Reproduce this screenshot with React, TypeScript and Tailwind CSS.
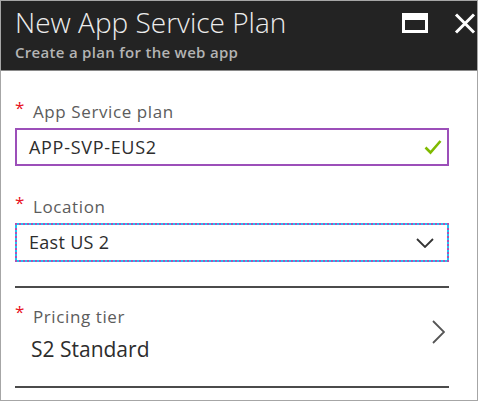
import React from 'react';

function Asterisk() {
  return <span className="text-[#e81123] text-[17px] leading-none w-[18px] shrink-0 -mt-[2px]">*</span>;
}

function MaximizeIcon() {
  return (
    <svg width="26" height="20" viewBox="0 0 26 20" className="block">
      <rect x="1.5" y="1.5" width="23" height="17" fill="none" stroke="#fff" strokeWidth="3" />
      <rect x="1" y="1" width="24" height="6" fill="#fff" />
    </svg>
  );
}

function CloseIcon() {
  return (
    <svg width="22" height="21" viewBox="0 0 22 21" className="block">
      <path d="M2 1.5 L20 19.5 M20 1.5 L2 19.5" stroke="#fff" strokeWidth="3" />
    </svg>
  );
}

export default function App() {
  return (
    <div className="w-[480px] h-[403px] bg-white font-['Open_Sans',sans-serif]">
      <div className="w-[478px] h-[401px] border border-[#a6a6a6] flex flex-col">
        <header className="h-[70px] shrink-0 bg-[#232323] border-b border-[#8a8a8a] flex justify-between pl-[14px] pr-[1px]">
          <div className="pt-[4px]">
            <h1 className="text-[28px] leading-[34px] font-light text-[#ececec]">New App Service Plan</h1>
            <p className="text-[15px] leading-[20px] font-semibold text-[#b4b4b4] mt-[3px] tracking-[0.3px]">Create a plan for the web app</p>
          </div>
          <div className="flex items-start gap-[26px] pt-[12px]">
            <MaximizeIcon />
            <CloseIcon />
          </div>
        </header>

        <div className="px-[14px] pt-[30px] pr-[28px]">
          <div className="flex items-start h-[27px]">
            <Asterisk />
            <span className="text-[17px] leading-[22px] text-[#5c5c5c] tracking-[0.6px]">App Service plan</span>
          </div>
          <div className="h-[38px] border-2 border-[#9c4fb9] flex items-center justify-between pl-[12px] pr-[5px]">
            <span className="text-[18px] text-[#2d2d2d] tracking-[0.7px]">APP-SVP-EUS2</span>
            <svg width="18" height="15" viewBox="0 0 18 15">
              <path d="M1.5 7.5 L6.5 12.5 L16.5 1" fill="none" stroke="#7fba00" strokeWidth="2.6" />
            </svg>
          </div>

          <div className="flex items-start h-[27px] mt-[30px]">
            <Asterisk />
            <span className="text-[17px] leading-[22px] text-[#5c5c5c] tracking-[0.6px]">Location</span>
          </div>
          <div className="h-[39px] border-2 border-[#23c4f2] outline-2 outline-dotted outline-[#b24fb2] -outline-offset-2 flex items-center justify-between pl-[12px] pr-[13px]">
            <span className="text-[18px] text-[#2d2d2d] tracking-[0.3px]">East US 2</span>
            <svg width="18" height="10" viewBox="0 0 18 10">
              <path d="M1 1 L9 9 L17 1" fill="none" stroke="#333" strokeWidth="1.8" />
            </svg>
          </div>

          <div className="h-[2px] bg-[#4b4b4b] mt-[24px]" />

          <div className="flex items-start justify-between h-[98px]">
            <div className="flex items-start pt-[17px]">
              <Asterisk />
              <div className="flex flex-col">
                <span className="text-[17px] leading-[24px] text-[#5c5c5c] tracking-[0.6px]">Pricing tier</span>
                <span className="text-[21px] leading-[30px] text-[#2d2d2d] -ml-[2px] mt-[5px]">S2 Standard</span>
              </div>
            </div>
            <svg width="13" height="24" viewBox="0 0 13 24" className="mr-[4px] mt-[32px]">
              <path d="M1 1 L12 12 L1 23" fill="none" stroke="#555" strokeWidth="1.8" />
            </svg>
          </div>

          <div className="h-[2px] bg-[#4b4b4b]" />
        </div>
      </div>
    </div>
  );
}
